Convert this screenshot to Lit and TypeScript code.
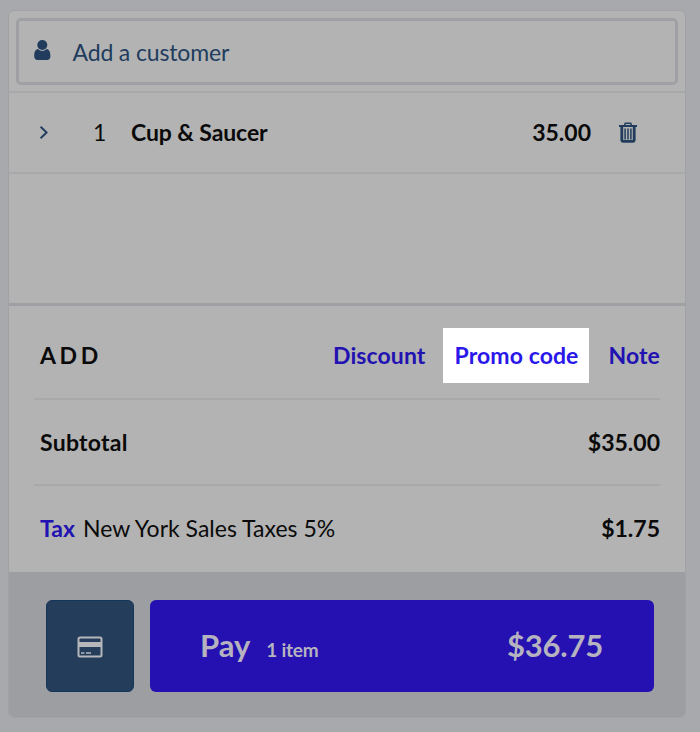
import { html, css, LitElement } from "lit";
import { customElement, state } from "lit/decorators.js";

type Item = {
	qty: number;
	name: string;
	price: number;
};

@customElement("app-root")
export class SaleCart extends LitElement {
	static styles = css`
		:host {
			display: block;
			box-sizing: border-box;
			width: 700px;
			height: 732px;
			padding: 10px 14px 14px 8px;
			background: #a8a9ad;
			font-family: Lato, "Liberation Sans", sans-serif;
			font-size: 23px;
			line-height: 28px;
			color: #0a0a0a;
			overflow: hidden;
		}
		* {
			box-sizing: border-box;
		}
		svg {
			display: block;
		}
		button {
			border: none;
			padding: 0;
			font: inherit;
			background: none;
			cursor: pointer;
		}
		.cart {
			display: flex;
			flex-direction: column;
			height: 708px;
			background: #b3b3b3;
			border: 1px solid #a1a2a6;
			border-radius: 6px;
			overflow: hidden;
		}
		.cart > * {
			flex-shrink: 0;
		}
		.customer {
			height: 82px;
			padding: 7px 7px 0 7px;
			border-bottom: 2px solid #a8a9ab;
		}
		.customer-box {
			display: flex;
			align-items: center;
			height: 67px;
			padding-left: 15px;
			border: 3px solid #9fa0a4;
			border-radius: 5px;
			color: #213c5d;
		}
		.customer-box span {
			margin-left: 21.5px;
			letter-spacing: -0.15px;
		}
		.customer-box svg {
			margin-top: -4px;
		}
		.item {
			display: flex;
			align-items: center;
			height: 81px;
			padding: 0 48px 2px 30px;
			border-bottom: 2px solid #a8a9ab;
		}
		.qty {
			margin-left: 44px;
			width: 38px;
		}
		.strong {
			font-weight: 700;
		}
		.name {
			letter-spacing: -0.1px;
		}
		.price {
			margin-left: auto;
			margin-right: 28px;
		}
		.trash {
			margin-top: 2px;
		}
		.totals {
			margin-top: 129px;
			height: 269px;
			padding: 0 25px 0 25px;
			border-top: 3px solid #9fa0a4;
		}
		.line {
			display: flex;
			align-items: center;
			justify-content: space-between;
			height: 86px;
			padding: 0 0 1px 6px;
			border-bottom: 2px solid #a8a9aa;
		}
		.line.add {
			height: 94px;
			padding: 7px 0 0 6px;
		}
		.line:last-child {
			padding-bottom: 3px;
			border-bottom: none;
		}
		.title {
			padding-bottom: 2px;
			font-weight: 700;
			letter-spacing: 3.6px;
		}
		.label {
			letter-spacing: 0.25px;
		}
		.links {
			display: flex;
			align-items: center;
		}
		.link {
			color: #2112b1;
			font-weight: 700;
			letter-spacing: 0.1px;
		}
		.links .link {
			padding-bottom: 2px;
		}
		.links .active {
			width: 146px;
			height: 55px;
			margin: 0 20px 0 17px;
			padding-left: 2px;
			background: #fff;
			color: #2a18ea;
		}
		.tax .link {
			margin-right: 8px;
			letter-spacing: 0;
		}
		.footer {
			display: flex;
			gap: 16px;
			height: 145px;
			padding: 28px 31px 25px 37px;
			background: #9d9ea2;
		}
		.card {
			display: flex;
			align-items: center;
			justify-content: center;
			width: 88px;
			height: 92px;
			padding-top: 2px;
			border: 1px solid #14365a;
			border-radius: 6px;
			background: #243d5b;
		}
		.pay {
			display: flex;
			align-items: baseline;
			flex: 1;
			height: 92px;
			padding: 26px 51px 0 50px;
			border-radius: 6px;
			background: #2511b2;
			color: #b5b3bf;
			font-size: 31px;
			line-height: 38px;
			font-weight: 700;
		}
		.count {
			margin-left: 16px;
			font-size: 19px;
			letter-spacing: -0.25px;
		}
		.total {
			margin-left: auto;
			letter-spacing: -0.2px;
		}
	`;

	@state()
	items: Item[] = [{ qty: 1, name: "Cup & Saucer", price: 35 }];

	@state()
	taxRate = 0.05;

	@state()
	active = "Promo code";

	get subtotal() {
		return this.items.reduce((sum, item) => sum + item.qty * item.price, 0);
	}

	get tax() {
		return this.subtotal * this.taxRate;
	}

	render() {
		return html`<div class="cart">
			<div class="customer">
				<div class="customer-box">
					<svg width="17" height="20" viewBox="0 0 17 20" fill="#213c5d">
						<circle cx="8.3" cy="5" r="5" />
						<path
							d="M4 9C1.2 9.5.2 12 .2 16.2.2 18.6 1.5 20 3.5 20h9.6c2 0 3.3-1.4 3.3-3.8 0-4.2-1-6.7-3.8-7.2-1.2 1.3-2.6 1.9-4.3 1.9S5.2 10.3 4 9z"
						/>
					</svg>
					<span>Add a customer</span>
				</div>
			</div>
			${this.items.map((item) => this.renderItem(item))}
			<div class="totals">
				<div class="line add">
					<span class="title">ADD</span>
					<div class="links">
						${["Discount", "Promo code", "Note"].map(
							(name) =>
								html`<button
									class=${name === this.active ? "link active" : "link"}
									@click=${() => this.select(name)}
								>
									${name}
								</button>`
						)}
					</div>
				</div>
				<div class="line">
					<span class="strong label">Subtotal</span>
					<span class="strong">$${this.subtotal.toFixed(2)}</span>
				</div>
				<div class="line">
					<div class="tax">
						<button class="link">Tax</button>New York Sales Taxes
						${this.taxRate * 100}%
					</div>
					<span class="strong">$${this.tax.toFixed(2)}</span>
				</div>
			</div>
			<div class="footer">
				<button class="card" aria-label="Card">
					<svg width="26" height="22" viewBox="0 0 26 22">
						<rect
							x="1.5"
							y="1.5"
							width="23"
							height="19"
							rx="1.5"
							fill="none"
							stroke="#b5b7ba"
							stroke-width="2"
						/>
						<path d="M1 6h24v5H1z" fill="#b5b7ba" />
						<path d="M4 17h3.5M9 17h5" stroke="#b5b7ba" stroke-width="1.6" />
					</svg>
				</button>
				<button class="pay">
					<span>Pay</span>
					<span class="count">${this.items.length} item</span>
					<span class="total">$${(this.subtotal + this.tax).toFixed(2)}</span>
				</button>
			</div>
		</div>`;
	}

	renderItem(item: Item) {
		return html`<div class="item">
			<svg
				width="10"
				height="14"
				viewBox="0 0 10 14"
				fill="none"
				stroke="#213c5d"
				stroke-width="1.9"
			>
				<path d="M1.6 1.7 7.6 7.5l-6 5.8" />
			</svg>
			<span class="qty">${item.qty}</span>
			<span class="strong name">${item.name}</span>
			<span class="price strong">${item.price.toFixed(2)}</span>
			<svg
				class="trash"
				width="18"
				height="21"
				viewBox="0 0 18 21"
				fill="none"
				stroke="#213c5d"
			>
				<path d="M0 4h18" stroke-width="1.9" />
				<path d="M5.3 3.8 6.3 1.2h5.4l1 2.6" stroke-width="1.5" />
				<path
					d="M2.8 4.5v13.2c0 1 .6 1.6 1.4 1.6h9.6c.8 0 1.4-.6 1.4-1.6V4.5"
					stroke-width="2.8"
				/>
				<path d="M6.1 6.5v11M9 6.5v11M11.9 6.5v11" stroke-width="1.5" />
			</svg>
		</div>`;
	}

	select(name: string) {
		this.active = name;
	}
}
